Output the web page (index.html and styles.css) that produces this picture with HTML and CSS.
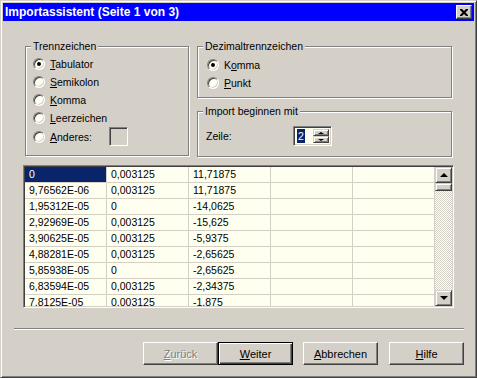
FILE: index.html
```html
<!DOCTYPE html>
<html lang="de">
<head>
  <meta charset="UTF-8">
  <title>Importassistent</title>
  <link rel="stylesheet" href="styles.css">
</head>
<body>
  <div class="window">
    <div class="titlebar">
      <span class="title">Importassistent (Seite 1 von 3)</span>
      <button class="close" type="button">
        <svg width="8" height="7" viewBox="0 0 8 7"><path d="M0 0h2l2 2 2-2h2v1l-2.5 2.5L8 6v1H6L4 5 2 7H0V6l2.5-2.5L0 1z" fill="#000"/></svg>
      </button>
    </div>

    <div class="client">
      <div class="options">
        <!-- Trennzeichen -->
        <fieldset class="group group-sep">
          <legend>Trennzeichen</legend>
          <div class="opts">
            <div class="opt"><span class="radio on"></span><span><u>T</u>abulator</span></div>
            <div class="opt"><span class="radio"></span><span><u>S</u>emikolon</span></div>
            <div class="opt"><span class="radio"></span><span><u>K</u>omma</span></div>
            <div class="opt"><span class="radio"></span><span><u>L</u>eerzeichen</span></div>
            <div class="opt opt-other"><span class="radio"></span><span><u>A</u>nderes:</span><span class="other-box"></span></div>
          </div>
        </fieldset>

        <div class="right-col">
          <fieldset class="group group-dec">
            <legend>Dezimaltrennzeichen</legend>
            <div class="opts">
              <div class="opt"><span class="radio on"></span><span>K<u>o</u>mma</span></div>
              <div class="opt"><span class="radio"></span><span><u>P</u>unkt</span></div>
            </div>
          </fieldset>
          <fieldset class="group group-start">
            <legend>Import beginnen mit</legend>
            <div class="start-row">
              <span class="start-label">Zeile:</span>
              <div class="spin">
                <span class="spin-value"><span class="selected">2</span></span>
                <div class="spin-btns">
                  <span class="spin-btn"><span class="tri-up small"></span></span>
                  <span class="spin-btn"><span class="tri-down small"></span></span>
                </div>
              </div>
            </div>
          </fieldset>
        </div>
      </div>

      <div class="grid-box">
        <div class="table-wrap">
          <table class="data">
            <tr><td class="sel">0</td><td>0,003125</td><td>11,71875</td><td></td><td></td></tr>
            <tr><td>9,76562E-06</td><td>0,003125</td><td>11,71875</td><td></td><td></td></tr>
            <tr><td>1,95312E-05</td><td>0</td><td>-14,0625</td><td></td><td></td></tr>
            <tr><td>2,92969E-05</td><td>0,003125</td><td>-15,625</td><td></td><td></td></tr>
            <tr><td>3,90625E-05</td><td>0,003125</td><td>-5,9375</td><td></td><td></td></tr>
            <tr><td>4,88281E-05</td><td>0,003125</td><td>-2,65625</td><td></td><td></td></tr>
            <tr><td>5,85938E-05</td><td>0</td><td>-2,65625</td><td></td><td></td></tr>
            <tr><td>6,83594E-05</td><td>0,003125</td><td>-2,34375</td><td></td><td></td></tr>
            <tr><td>7,8125E-05</td><td>0,003125</td><td>-1,875</td><td></td><td></td></tr>
          </table>
        </div>
        <div class="scrollbar">
          <span class="sb-btn"><span class="tri-up"></span></span>
          <span class="sb-thumb"></span>
          <span class="sb-track"></span>
          <span class="sb-btn"><span class="tri-down"></span></span>
        </div>
      </div>

      <div class="rule"></div>

      <div class="actions">
        <button class="btn disabled" type="button"><u>Z</u>urück</button>
        <button class="btn default" type="button"><u>W</u>eiter</button>
        <button class="btn cancel" type="button"><u>A</u>bbrechen</button>
        <button class="btn help" type="button"><u>H</u>ilfe</button>
      </div>
    </div>
  </div>
</body>
</html>
```

FILE: styles.css
```css
* {
  box-sizing: border-box;
}
body {
  margin: 0;
  background-color: #d4d0c8;
  font-family: "Liberation Sans", Arial, sans-serif;
  font-size: 10.5px;
  color: #000;
}
u {
  text-decoration: underline;
  text-underline-offset: 1px;
}
.window {
  width: 477px;
  height: 378px;
  background-color: #d4d0c8;
  border: 1px solid;
  border-color: #d4d0c8 #404040 #404040 #d4d0c8;
  box-shadow: inset 1px 1px #fff, inset -1px -1px #808080;
  padding: 2px;
  display: flex;
  flex-direction: column;
}
.titlebar {
  height: 18px;
  background-color: #0000ff;
  color: white;
  display: flex;
  align-items: center;
  justify-content: space-between;
  padding-left: 2px;
}
.title {
  font-weight: bold;
  font-size: 12px;
}
.close {
  width: 16px;
  height: 14px;
  margin-right: 2px;
  padding: 0;
  display: flex;
  align-items: center;
  justify-content: center;
  background-color: #d4d0c8;
  border: 1px solid;
  border-color: #fff #404040 #404040 #fff;
  box-shadow: inset -1px -1px #808080;
}
.client {
  flex: 1;
}
.options {
  display: grid;
  grid-template-columns: 164px 255px;
  column-gap: 8px;
  margin: 19px 0 0 22px;
}
.right-col {
  display: flex;
  flex-direction: column;
  gap: 7px;
}
.group {
  margin: 0;
  padding: 0;
  border: 1px solid #808080;
  box-shadow: inset 1px 1px #fff, 1px 1px #fff;
  min-width: 0;
}
.group legend {
  margin-left: 5px;
  padding: 0 2px;
  line-height: 12px;
  background-color: #d4d0c8;
}
.group-sep {
  height: 116px;
}
.group-dec {
  height: 58px;
}
.group-start {
  height: 52px;
}
.group-sep .opts {
  padding: 3px 0 0 7px;
}
.group-dec .opts {
  padding: 4px 0 0 9px;
}
.opt {
  display: flex;
  align-items: center;
  gap: 5px;
  height: 18px;
}
.opt-other {
  height: 19px;
}
.radio {
  position: relative;
  width: 12px;
  height: 12px;
  border-radius: 50%;
  background-color: #fffff0;
  border: 1px solid;
  border-color: #808080 #fff #fff #808080;
  box-shadow: inset 1px 1px #404040, inset -1px -1px #d4d0c8;
  flex: none;
}
.radio.on::after {
  content: "";
  position: absolute;
  left: 3px;
  top: 3px;
  width: 4px;
  height: 4px;
  border-radius: 50%;
  background-color: #000;
}
.other-box {
  width: 19px;
  height: 19px;
  margin-left: 12px;
  border: 1px solid;
  border-color: #808080 #fff #fff #808080;
  box-shadow: inset 1px 1px #404040, inset -1px -1px #d4d0c8;
}
.start-row {
  display: flex;
  align-items: center;
  padding: 9px 0 0 8px;
}
.start-label {
  width: 87px;
}
.spin {
  width: 39px;
  height: 20px;
  display: flex;
  padding: 2px;
  background-color: #fffff0;
  border: 1px solid;
  border-color: #808080 #fff #fff #808080;
  box-shadow: inset 1px 1px #404040, inset -1px -1px #d4d0c8;
}
.spin-value {
  flex: 1;
  padding-left: 1px;
  line-height: 14px;
}
.selected {
  display: inline-block;
  background-color: #0a246a;
  color: white;
  padding: 0 1px;
}
.spin-btns {
  width: 16px;
  display: flex;
  flex-direction: column;
}
.spin-btn {
  flex: 1;
  display: flex;
  align-items: center;
  justify-content: center;
  background-color: #d4d0c8;
  border: 1px solid;
  border-color: #d4d0c8 #404040 #404040 #d4d0c8;
  box-shadow: inset 1px 1px #fff, inset -1px -1px #808080;
}
.tri-up,
.tri-down {
  width: 0;
  height: 0;
  border-left: 4px solid transparent;
  border-right: 4px solid transparent;
}
.tri-up {
  border-bottom: 4px solid #000;
}
.tri-down {
  border-top: 4px solid #000;
}
.tri-up.small {
  border-left-width: 3px;
  border-right-width: 3px;
  border-bottom-width: 2px;
}
.tri-down.small {
  border-left-width: 3px;
  border-right-width: 3px;
  border-top-width: 2px;
}
.grid-box {
  display: flex;
  width: 431px;
  height: 143px;
  margin: 8px 0 0 20px;
  padding: 1px;
  border: 1px solid;
  border-color: #808080 #fff #fff #808080;
  box-shadow: inset 1px 1px #404040, inset -1px -1px #d4d0c8;
  overflow: hidden;
}
.table-wrap {
  width: 410px;
  overflow: hidden;
  background-color: #fffff0;
}
.data {
  border-collapse: separate;
  border-spacing: 0;
  table-layout: fixed;
  width: 410px;
}
.data td {
  width: 82px;
  height: 16px;
  padding: 0 3px 0 4px;
  line-height: 15px;
  white-space: nowrap;
  overflow: hidden;
  background-color: #fffff0;
  border-right: 1px solid #d4d0c8;
  border-bottom: 1px solid #d4d0c8;
}
.data td.sel {
  background-color: #0a246a;
  color: white;
}
.scrollbar {
  width: 17px;
  display: flex;
  flex-direction: column;
  background: repeating-conic-gradient(#fff 0 25%, #d4d0c8 0 50%) 0 0 / 2px 2px;
}
.sb-btn,
.sb-thumb {
  display: flex;
  align-items: center;
  justify-content: center;
  background-color: #d4d0c8;
  border: 1px solid;
  border-color: #d4d0c8 #404040 #404040 #d4d0c8;
  box-shadow: inset 1px 1px #fff, inset -1px -1px #808080;
}
.sb-btn {
  height: 16px;
}
.sb-thumb {
  height: 8px;
}
.sb-track {
  flex: 1;
}
.rule {
  width: 450px;
  height: 2px;
  margin: 20px 0 0 11px;
  border-top: 1px solid #808080;
  border-bottom: 1px solid #fff;
}
.actions {
  display: flex;
  justify-content: flex-end;
  margin-top: 12px;
  padding-right: 10px;
}
.btn {
  width: 75px;
  height: 23px;
  padding: 0;
  font-family: "Liberation Sans", Arial, sans-serif;
  font-size: 11px;
  color: #000;
  background-color: #d4d0c8;
  border: 1px solid;
  border-color: #fff #404040 #404040 #fff;
  box-shadow: inset -1px -1px #808080;
}
.btn.default {
  border-color: #000;
  box-shadow: inset 1px 1px #fff, inset -1px -1px #404040, inset -2px -2px #808080;
}
.btn.disabled {
  color: #808080;
  text-shadow: 1px 1px #fff;
}
.btn.cancel {
  margin-left: 10px;
}
.btn.help {
  margin-left: 11px;
}
```
